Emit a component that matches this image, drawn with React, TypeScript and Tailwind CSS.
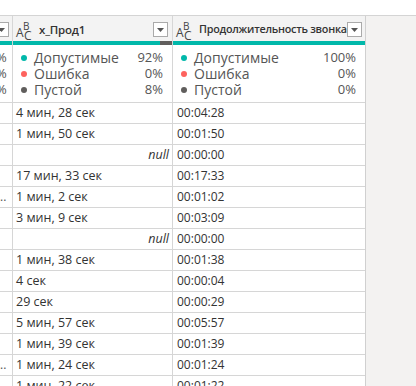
import React from 'react';

type Row = { text: string | null; time: string; left?: string };

const rows: Row[] = [
  { text: '4 мин, 28 сек', time: '00:04:28' },
  { text: '1 мин, 50 сек', time: '00:01:50' },
  { text: null, time: '00:00:00' },
  { text: '17 мин, 33 сек', time: '00:17:33' },
  { text: '1 мин, 2 сек', time: '00:01:02', left: '..' },
  { text: '3 мин, 9 сек', time: '00:03:09' },
  { text: null, time: '00:00:00' },
  { text: '1 мин, 38 сек', time: '00:01:38' },
  { text: '4 сек', time: '00:00:04' },
  { text: '29 сек', time: '00:00:29' },
  { text: '5 мин, 57 сек', time: '00:05:57' },
  { text: '1 мин, 39 сек', time: '00:01:39' },
  { text: '1 мин, 24 сек', time: '00:01:24', left: '..' },
  { text: '1 мин, 22 сек', time: '00:01:22' },
];

function TypeIcon() {
  return (
    <span className="relative inline-block h-[22px] w-[16px] shrink-0 text-[#444]">
      <span className="absolute left-0 top-[8px] text-[12px] leading-none">A</span>
      <span className="absolute left-[7px] top-[2px] text-[10px] leading-none">B</span>
      <span className="absolute left-[8px] top-[11px] text-[12px] leading-none">C</span>
    </span>
  );
}

function DropBox() {
  return (
    <span className="flex h-[15px] w-[15px] shrink-0 items-center justify-center border border-[#aaa] bg-white">
      <svg width="7" height="4" viewBox="0 0 7 4">
        <path d="M0 0h7L3.5 4z" fill="#555" />
      </svg>
    </span>
  );
}

function Stats({ valid, error, empty }: { valid: string; error: string; empty: string }) {
  const items = [
    { label: 'Допустимые', value: valid, color: 'bg-[#01b8aa]' },
    { label: 'Ошибка', value: error, color: 'bg-[#fd625e]' },
    { label: 'Пустой', value: empty, color: 'bg-[#605e5c]' },
  ];
  return (
    <div className="flex h-[58px] shrink-0 flex-col justify-center border-b border-[#d6d6d6] pl-[8px] pr-[9px]">
      {items.map((it) => (
        <div key={it.label} className="flex h-[16px] items-center text-[14px] text-[#555]">
          <span className={`mr-[7px] h-[6px] w-[6px] rounded-full ${it.color}`} />
          <span className="flex-1">{it.label}</span>
          <span className="text-[13px]">{it.value}</span>
        </div>
      ))}
    </div>
  );
}

export default function App() {
  return (
    <div
      className="h-[386px] w-[416px] overflow-hidden bg-white"
      style={{ fontFamily: '"Segoe UI", "Open Sans", sans-serif' }}
    >
      <div className="h-[16px] border-b border-[#d4d4d4] bg-white" />
      <div className="flex h-[370px]">
        <div className="flex h-full w-[366px] border-r border-[#d0d0d0] bg-white">
          {/* partial first column */}
          <div className="flex w-[13px] shrink-0 flex-col border-r border-[#d6d6d6]">
            <div className="flex h-[25px] shrink-0 items-center bg-[#f3f3f3] pt-[2px]">
              <span className="-ml-[6px] flex h-[15px] w-[15px] items-center justify-center border border-[#aaa] bg-white">
                <svg width="7" height="4" viewBox="0 0 7 4">
                  <path d="M0 0h7L3.5 4z" fill="#555" />
                </svg>
              </span>
            </div>
            <div className="h-[4px] shrink-0 bg-[#01b8aa]" />
            <div className="flex h-[58px] shrink-0 flex-col justify-center overflow-hidden border-b border-[#d6d6d6]">
              {[0, 1, 2].map((i) => (
                <div key={i} className="-ml-[4px] flex h-[16px] items-center text-[13px] text-[#555]">%</div>
              ))}
            </div>
            {rows.map((r, i) => (
              <div key={i} className="flex h-[21px] shrink-0 items-center overflow-hidden border-b border-[#d6d6d6] text-[12px] text-[#555]">
                {r.left ?? ''}
              </div>
            ))}
          </div>

          {/* x_Прод1 */}
          <div className="flex w-[160px] shrink-0 flex-col border-r border-[#d6d6d6]">
            <div className="flex h-[25px] shrink-0 items-center gap-[7px] bg-[#f3f3f3] pl-[3px] pr-[4px] pt-[2px]">
              <TypeIcon />
              <span className="flex-1 text-[11.5px] font-semibold tracking-[-0.2px] text-[#333]">x_Прод1</span>
              <DropBox />
            </div>
            <div className="flex h-[4px] shrink-0">
              <div className="w-[147px] bg-[#01b8aa]" />
              <div className="flex-1 bg-[#605e5c]" />
            </div>
            <Stats valid="92%" error="0%" empty="8%" />
            {rows.map((r, i) => (
              <div key={i} className="flex h-[21px] shrink-0 items-center border-b border-[#d6d6d6] px-[3px] text-[12.5px] text-[#333]">
                {r.text ? (
                  <span>{r.text}</span>
                ) : (
                  <span className="ml-auto italic">null</span>
                )}
              </div>
            ))}
          </div>

          {/* Продолжительность звонка */}
          <div className="flex min-w-0 flex-1 flex-col">
            <div className="flex h-[25px] shrink-0 items-center gap-[7px] bg-[#f3f3f3] pl-[3px] pr-[3px] pt-[2px]">
              <TypeIcon />
              <span className="min-w-0 flex-1 whitespace-nowrap text-[10.8px] font-semibold tracking-[-0.25px] text-[#333]">Продолжительность звонка</span>
              <DropBox />
            </div>
            <div className="h-[4px] shrink-0 bg-[#01b8aa]" />
            <Stats valid="100%" error="0%" empty="0%" />
            {rows.map((r, i) => (
              <div key={i} className="flex h-[21px] shrink-0 items-center border-b border-[#d6d6d6] px-[4px] text-[12px] text-[#333]">
                {r.time}
              </div>
            ))}
          </div>
        </div>
        <div className="flex-1 bg-[#f3f2f1]" />
      </div>
    </div>
  );
}
